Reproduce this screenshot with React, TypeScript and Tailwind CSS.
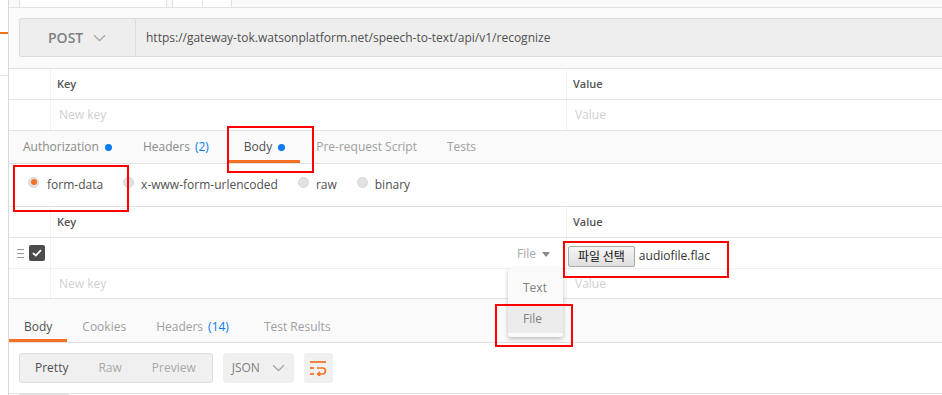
import React from 'react';

const ORANGE = 'bg-[#f47023]';

function Dot() {
  return <span className="ml-[6px] inline-block w-[7px] h-[7px] rounded-full bg-[#097bed]" />;
}

function Chevron({ className }: { className?: string }) {
  return (
    <svg className={className} width="13" height="8" viewBox="0 0 13 8" fill="none">
      <path d="M1 1.2 L6.5 6.5 L12 1.2" stroke="#a8a8a8" strokeWidth="1.3" />
    </svg>
  );
}

function Radio({ checked }: { checked?: boolean }) {
  return (
    <span className="mb-[6px] w-[11px] h-[11px] rounded-full bg-[#e2e2e2] border border-[#d6d6d6] flex items-center justify-center shrink-0">
      {checked && <span className={`w-[6px] h-[6px] rounded-full ${ORANGE}`} />}
    </span>
  );
}

function KeyValueHeader() {
  return (
    <div className="flex h-[31px] border-b border-[#e4e4e4] bg-white">
      <div className="w-[42px] shrink-0 border-r border-[#f1f1f1]" />
      <div className="w-[516px] shrink-0 border-r border-[#f1f1f1] pl-[6px] flex items-center text-[11px] font-semibold text-[#555]">
        Key
      </div>
      <div className="flex-1 pl-[6px] flex items-center text-[11px] font-semibold text-[#555]">Value</div>
    </div>
  );
}

function PlaceholderRow({ h = 'h-[31px]' }: { h?: string }) {
  return (
    <div className={`flex ${h} border-b border-[#e4e4e4] bg-white`}>
      <div className="w-[42px] shrink-0 border-r border-[#f1f1f1]" />
      <div className="w-[516px] shrink-0 border-r border-[#f1f1f1] pl-[8px] flex items-center text-[12px] text-[#cfcfcf]">
        New key
      </div>
      <div className="flex-1 pl-[8px] flex items-center text-[12px] text-[#cfcfcf]">Value</div>
    </div>
  );
}

export default function App() {
  return (
    <div className="relative flex w-[942px] h-[395px] overflow-hidden bg-white font-['Open_Sans',sans-serif]">
      {/* left sidebar edge */}
      <div className="w-[9px] shrink-0 border-r border-[#d9d9d9] bg-white flex flex-col">
        <div className={`mt-[32px] h-[2px] ${ORANGE}`} />
        <div className="mt-[41px] h-px bg-[#e4e4e4]" />
      </div>

      <div className="flex-1 flex flex-col bg-[#fafafa] min-w-0">
        {/* top tab strip (cut off) */}
        <div className="h-[8px] shrink-0 border-b border-[#e2e2e2] flex">
          <div className="ml-[10px] w-[148px] border-x border-[#e2e2e2] bg-white" />
          <div className="ml-[5px] w-[31px] border-x border-[#e2e2e2] bg-white" />
          <div className="w-[29px] border-r border-[#e2e2e2] bg-white" />
        </div>

        {/* request url bar */}
        <div className="shrink-0 pl-[10px] pt-[10px] pb-[11px] border-b border-[#e0e0e0]">
          <div className="flex h-[39px] border border-r-0 border-[#dcdcdc] rounded-l-[3px] bg-[#eeeeee]">
            <div className="w-[116px] shrink-0 border-r border-[#dcdcdc] flex items-center pl-[28px] gap-[10px]">
              <span className="text-[14px] font-semibold text-[#808080]">POST</span>
              <Chevron />
            </div>
            <div className="flex items-center pl-[10px] text-[12px] text-[#505050]">
              https://gateway-tok.watsonplatform.net/speech-to-text/api/v1/recognize
            </div>
          </div>
        </div>

        {/* params table */}
        <KeyValueHeader />
        <PlaceholderRow />

        {/* request tabs */}
        <div className="shrink-0 h-[33px] border-b border-[#e0e0e0] flex items-stretch pl-[14px] text-[12px] text-[#8a8a8a]">
          <div className="flex items-center">
            Authorization
            <Dot />
          </div>
          <div className="ml-[31px] flex items-center">
            Headers <span className="ml-[5px] text-[#097bed]">(2)</span>
          </div>
          <div className="ml-[35px] relative flex items-center text-[#505050]">
            Body
            <Dot />
            <span className={`absolute -left-[15px] -right-[15px] bottom-0 h-[3px] ${ORANGE}`} />
          </div>
          <div className="ml-[31px] flex items-center text-[#a0a0a0]">Pre-request Script</div>
          <div className="ml-[30px] flex items-center text-[#a0a0a0]">Tests</div>
        </div>

        {/* body type radios */}
        <div className="shrink-0 h-[43px] border-b border-[#e0e0e0] bg-white flex items-center pl-[19px] text-[12px] text-[#505050]">
          <Radio checked />
          <span className="ml-[8px]">form-data</span>
          <span className="ml-[20px]"><Radio /></span>
          <span className="ml-[7px]">x-www-form-urlencoded</span>
          <span className="ml-[20px]"><Radio /></span>
          <span className="ml-[7px]">raw</span>
          <span className="ml-[20px]"><Radio /></span>
          <span className="ml-[7px]">binary</span>
        </div>

        {/* form-data table */}
        <KeyValueHeader />
        <div className="flex h-[31px] shrink-0 border-b border-[#f0f0f0] bg-white">
          <div className="w-[42px] shrink-0 border-r border-[#f1f1f1] flex items-center pl-[8px] gap-[5px]">
            <span className="flex flex-col gap-[3px] w-[7px]">
              <span className="h-px bg-[#9a9a9a]" />
              <span className="h-px bg-[#9a9a9a]" />
              <span className="h-px bg-[#9a9a9a]" />
            </span>
            <span className="w-[16px] h-[16px] rounded-[2px] bg-[#4b4b4b] flex items-center justify-center">
              <svg width="10" height="8" viewBox="0 0 10 8" fill="none">
                <path d="M1 4 L3.8 6.6 L9 1.2" stroke="#fff" strokeWidth="1.8" />
              </svg>
            </span>
          </div>
          <div className="w-[516px] shrink-0 border-r border-[#f1f1f1] flex items-center justify-end pr-[16px] text-[12px] text-[#a8a8a8]">
            <span className="mt-[2px]">File</span>
            <svg className="ml-[6px] mt-[2px]" width="8" height="5" viewBox="0 0 8 5">
              <path d="M0 0 H8 L4 5 Z" fill="#8a8a8a" />
            </svg>
          </div>
          <div className="flex-1 flex items-center pl-[1px]">
            <span className="mt-[6px] h-[21px] px-[9px] flex items-center border border-[#a9a9a9] rounded-[2px] bg-gradient-to-b from-[#f6f6f6] to-[#dedede] text-[12px] text-[#111] font-['Noto_Sans_CJK_KR',sans-serif]">
              파일 선택
            </span>
            <span className="ml-[4px] mt-[5px] text-[12px] text-[#333]">audiofile.flac</span>
          </div>
        </div>
        <PlaceholderRow h="h-[30px]" />

        {/* response tabs */}
        <div className="shrink-0 h-[44px] border-b border-[#e0e0e0] pt-[12px] flex items-stretch text-[12px] text-[#a0a0a0]">
          <div className="relative px-[15px] flex items-center text-[#505050]">
            Body
            <span className={`absolute left-0 right-0 bottom-0 h-[3px] ${ORANGE}`} />
          </div>
          <div className="px-[15px] flex items-center">Cookies</div>
          <div className="px-[15px] flex items-center">
            Headers <span className="ml-[5px] text-[#097bed]">(14)</span>
          </div>
          <div className="pl-[20px] flex items-center">Test Results</div>
        </div>

        {/* response toolbar */}
        <div className="shrink-0 h-[51px] border-b border-[#e0e0e0] bg-white pt-[10px] pl-[10px] flex items-start gap-[10px] text-[12px]">
          <div className="h-[30px] flex items-center border border-[#dcdcdc] rounded-[3px] bg-[#f0f0f0]">
            <span className="px-[15px] text-[#505050]">Pretty</span>
            <span className="px-[15px] text-[#a8a8a8]">Raw</span>
            <span className="pl-[15px] pr-[16px] text-[#a8a8a8]">Preview</span>
          </div>
          <div className="h-[30px] w-[71px] flex items-center justify-between pl-[9px] pr-[9px] rounded-[3px] bg-[#f0f0f0] text-[#808080]">
            JSON
            <Chevron />
          </div>
          <div className="h-[30px] w-[29px] flex items-center justify-center rounded-[3px] bg-[#f0f0f0]">
            <svg width="18" height="16" viewBox="0 0 18 16" fill="none" stroke="#f47023" strokeWidth="1.7">
              <path d="M1 2 H17" />
              <path d="M1 8 H5" />
              <path d="M8 8 H13.5 A3 3 0 0 1 13.5 14 H9" />
              <path d="M11 11.8 L8.8 14 L11 16" />
              <path d="M1 14 H5" />
            </svg>
          </div>
        </div>
        <div className="flex-1 bg-white pl-[10px]">
          <div className="w-[50px] h-full border-t border-x border-[#e4e4e4] bg-[#f7f7f7]" />
        </div>
      </div>

      {/* type dropdown menu */}
      <div className="absolute left-[508px] top-[268px] w-[55px] py-[4px] rounded-[3px] bg-[#fafafa] shadow-[0_2px_4px_rgba(0,0,0,0.25)] text-[12px] text-[#808080]">
        <div className="h-[32px] flex items-center pl-[15px]">Text</div>
        <div className="h-[29px] flex items-center pl-[15px] bg-[#ececec]">File</div>
      </div>

      {/* red annotation boxes */}
      <div className="absolute left-[227px] top-[126px] w-[87px] h-[47px] border-2 border-[#ff0000]" />
      <div className="absolute left-[13px] top-[165px] w-[116px] h-[47px] border-2 border-[#ff0000]" />
      <div className="absolute left-[563px] top-[241px] w-[166px] h-[37px] border-2 border-[#ff0000]" />
      <div className="absolute left-[495px] top-[304px] w-[78px] h-[43px] border-2 border-[#ff0000]" />
    </div>
  );
}
